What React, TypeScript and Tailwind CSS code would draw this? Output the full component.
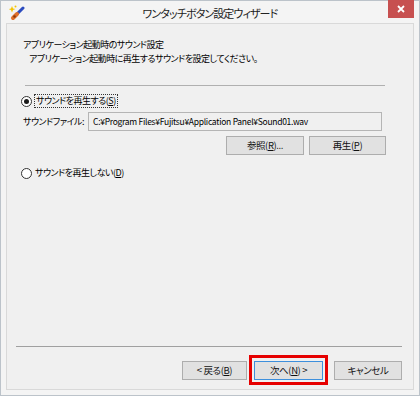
import React from "react";

const jp = "font-['Noto_Sans_CJK_JP',sans-serif] [font-feature-settings:'palt']";

function Radio({ checked }: { checked?: boolean }) {
  return (
    <span className="w-[11px] h-[11px] rounded-full border border-[#333333] bg-white flex items-center justify-center shrink-0">
      {checked && <span className="w-[5px] h-[5px] rounded-full bg-[#1a1a1a]" />}
    </span>
  );
}

function Btn({
  children,
  w,
  focused,
}: {
  children: React.ReactNode;
  w: string;
  focused?: boolean;
}) {
  return (
    <div
      className={`${w} h-[19px] flex items-center justify-center text-[9.5px] tracking-[-0.4px] text-[#111] border ${focused ? "border-[#3d8fdc]" : "border-[#adadad]"} bg-[#e1e1e1]`}
    >
      {children}
    </div>
  );
}

function WandIcon() {
  return (
    <svg width="16" height="16" viewBox="0 0 16 16">
      <path d="M3 1 L4 3.5 L6.5 4 L4 5 L3 7.5 L2 5 L-0.5 4 L2 3.5 Z" fill="#f5c400" />
      <circle cx="6.5" cy="1.5" r="1" fill="#f5c400" />
      <line x1="5" y1="12" x2="14" y2="3" stroke="#2c4bbf" strokeWidth="3" strokeLinecap="round" />
      <line x1="4" y1="13" x2="8" y2="9" stroke="#e0702a" strokeWidth="4" strokeLinecap="round" />
      <circle cx="5.5" cy="11.5" r="1.3" fill="#8a3a10" />
    </svg>
  );
}

export default function App() {
  return (
    <div className={`w-[420px] h-[396px] bg-[#f4f4f4] border border-[#bcc3ca] flex flex-col px-[5px] pb-[5px] ${jp}`}>
      {/* title bar */}
      <div className="relative h-[22px] shrink-0 flex items-center justify-center">
        <div className="absolute left-[3px] top-[4px]">
          <WandIcon />
        </div>
        <span className="text-[11px] tracking-[-0.9px] text-[#222] mt-[3px]">ワンタッチボタン設定ウィザード</span>
        <div className="absolute right-[0px] -top-[1px] w-[26px] h-[18px] bg-[#c75050] flex items-center justify-center">
          <svg width="8" height="8" viewBox="0 0 8 8">
            <path d="M1 1 L7 7 M7 1 L1 7" stroke="#fff" strokeWidth="1.8" />
          </svg>
        </div>
      </div>

      {/* client area */}
      <div className="flex-1 border border-[#d9d9d9] bg-[#f0f0f0] flex flex-col text-[#000] text-[9px] tracking-[-0.5px]">
        <div className="mt-[14px] pl-[16px] leading-[14px]">アプリケーション起動時のサウンド設定</div>
        <div className="pl-[22px] leading-[14px]">アプリケーション起動時に再生するサウンドを設定してください。</div>
        <div className="mt-[19px] ml-[18px] w-[360px] h-[1px] bg-[#b0b0b0]" />

        <div className="mt-[8px] ml-[14px] flex items-center h-[14px]">
          <Radio checked />
          <span className="ml-[2px] border border-dotted border-[#333] px-[1px] leading-[12px]">
            サウンドを再生する(<span className="underline">S</span>)
          </span>
        </div>

        <div className="mt-[4px] ml-[16px] flex items-center">
          <span className="w-[65px] whitespace-nowrap">サウンドファイル:</span>
          <div className="w-[294px] h-[19px] border border-[#b5b5b5] bg-[#f0f0f0] flex items-center pl-[4px] text-[8.5px] tracking-[-0.28px] whitespace-nowrap">
            C:¥Program Files¥Fujitsu¥Application Panel¥Sound01.wav
          </div>
        </div>

        <div className="mt-[5px] ml-[219px] flex gap-[5px]">
          <Btn w="w-[78px]">
            参照(<span className="underline">R</span>)...
          </Btn>
          <Btn w="w-[77px]">
            再生(<span className="underline">P</span>)
          </Btn>
        </div>

        <div className="mt-[11px] ml-[14px] flex items-center h-[14px]">
          <Radio />
          <span className="ml-[3px]">
            サウンドを再生しない(<span className="underline">D</span>)
          </span>
        </div>

        <div className="flex-1" />

        <div className="ml-[9px] mr-[11px] h-[1px] bg-[#a0a0a0]" />

        <div className="mt-[14px] mb-[9px] mr-[11px] flex justify-end items-center">
          <Btn w="w-[65px]">
            &lt; 戻る(<span className="underline">B</span>)
          </Btn>
          <div className="relative ml-[7px]">
            <Btn w="w-[69px]" focused>
              次へ(<span className="underline">N</span>) &gt;
            </Btn>
            <span className="absolute -left-[5px] -right-[5px] -top-[6px] -bottom-[5px] border-[3px] border-[#e60000]" />
          </div>
          <div className="ml-[11px]">
            <Btn w="w-[68px]">キャンセル</Btn>
          </div>
        </div>
      </div>
    </div>
  );
}
